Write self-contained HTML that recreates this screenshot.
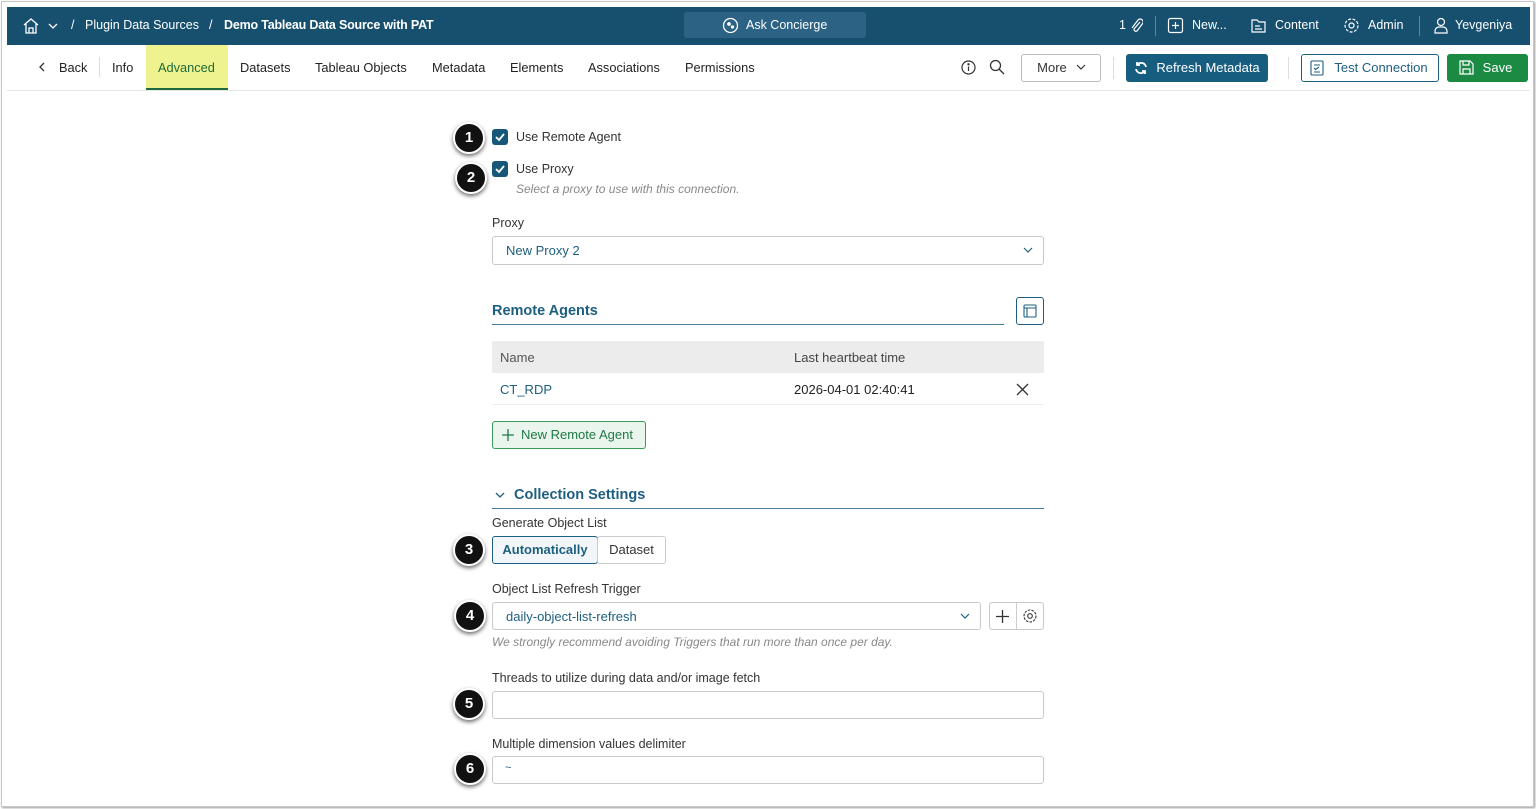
<!DOCTYPE html>
<html><head><meta charset="utf-8"><style>
*{box-sizing:border-box;margin:0;padding:0}
body{width:1536px;height:809px;background:#fff;font-family:"Liberation Sans",sans-serif;font-size:13px;color:#222;position:relative;overflow:hidden}
.frame{position:absolute;left:1px;top:1px;width:1533px;height:806px;background:#fff;border:1px solid #c8c8c8;box-shadow:1px 1px 2px #999}
.a{position:absolute;white-space:nowrap}
.top{position:absolute;left:7px;top:7px;width:1523px;height:38px;background:#174f6f;color:#fff}
.top .a{font-size:12.5px;top:11px}
.tab{font-size:12.8px;top:60px;color:#222}
.lbl{font-size:12.5px;color:#333}
.inp{position:absolute;border:1px solid #c9c9c9;border-radius:3px;background:#fff}
.badge{position:absolute;width:32px;height:32px;border-radius:50%;background:#111;border:2px solid #fff;box-shadow:0 2px 4px rgba(0,0,0,.6);color:#fff;font-weight:bold;font-size:15px;text-align:center;line-height:28px}
.cb{position:absolute;width:16px;height:16px;background:#17587a;border-radius:3px}
.btn{position:absolute;border-radius:3px;font-size:13px;text-align:center}
</style></head><body>
<div class="frame"></div>
<div class="top">
 <svg class="a" style="left:15px;top:10px" width="18" height="18" viewBox="0 0 18 18" fill="none" stroke="#fff" stroke-width="1.3"><path d="M2 8L9 2l7 6M4 7v9h10V7M7 16v-5h4v5"/></svg>
 <svg class="a" style="left:41px;top:15px" width="10" height="8" fill="none" stroke="#fff" stroke-width="1.3"><path d="M1 2l4 4 4-4"/></svg>
 <div class="a" style="left:64px">/</div>
 <div class="a" style="left:78px">Plugin Data Sources</div>
 <div class="a" style="left:202px">/</div>
 <div class="a" style="left:217px;font-weight:bold;letter-spacing:-0.2px">Demo Tableau Data Source with PAT</div>
 <div class="a" style="left:677px;top:5px;width:182px;height:26px;background:#2c6283;border-radius:3px"></div>
 <svg class="a" style="left:715px;top:10px" width="17" height="17" fill="none" stroke="#fff" stroke-width="1.3"><circle cx="8.5" cy="8.5" r="7"/><circle cx="7" cy="7" r="1.2" fill="#fff"/><circle cx="10.5" cy="10" r="1" fill="#fff"/></svg>
 <div class="a" style="left:739px">Ask Concierge</div>
 <div class="a" style="left:1112px">1</div>
 <svg class="a" style="left:1122px;top:10px" width="14" height="17" fill="none" stroke="#fff" stroke-width="1.2"><path d="M11 5l-6 7a2 2 0 003 2l6-8a3 3 0 00-5-3L3 11"/></svg>
 <div class="a" style="left:1148px;top:9px;width:1px;height:20px;background:#5a86a0"></div>
 <svg class="a" style="left:1160px;top:10px" width="17" height="17" fill="none" stroke="#fff" stroke-width="1.2"><rect x="1.5" y="1.5" width="14" height="14" rx="2"/><path d="M8.5 5v7M5 8.5h7"/></svg>
 <div class="a" style="left:1185px">New...</div>
 <svg class="a" style="left:1243px;top:10px" width="17" height="17" fill="none" stroke="#fff" stroke-width="1.2"><path d="M2 3h5l2 2h6v10H2z"/><path d="M5 9h5M5 12h7"/></svg>
 <div class="a" style="left:1268px">Content</div>
 <svg class="a" style="left:1336px;top:10px" width="17" height="17" fill="none" stroke="#fff" stroke-width="1.2"><circle cx="8.5" cy="8.5" r="2.5"/><circle cx="8.5" cy="8.5" r="6.5" stroke-dasharray="3 1.5"/></svg>
 <div class="a" style="left:1361px">Admin</div>
 <div class="a" style="left:1412px;top:9px;width:1px;height:20px;background:#5a86a0"></div>
 <svg class="a" style="left:1426px;top:10px" width="16" height="17" fill="none" stroke="#fff" stroke-width="1.2"><circle cx="8" cy="5" r="3.5"/><path d="M2 16v-2a4 4 0 014-4h4a4 4 0 014 4v2z"/></svg>
 <div class="a" style="left:1448px">Yevgeniya</div>
</div>
<div class="a" style="left:7px;top:90px;width:1523px;height:1px;background:#e5e5e5"></div>
<svg class="a" style="left:38px;top:62px" width="8" height="10" fill="none" stroke="#333" stroke-width="1.3"><path d="M6 1L2 5l4 4"/></svg>
<div class="a tab" style="left:59px">Back</div>
<div class="a" style="left:99px;top:57px;width:1px;height:20px;background:#ddd"></div>
<div class="a tab" style="left:112px">Info</div>
<div class="a" style="left:146px;top:45px;width:82px;height:45px;background:#eef38f;border-bottom:2px solid #1d6b3c"></div>
<div class="a tab" style="left:158px;color:#1f6b3a">Advanced</div>
<div class="a tab" style="left:240px">Datasets</div>
<div class="a tab" style="left:315px">Tableau Objects</div>
<div class="a tab" style="left:432px">Metadata</div>
<div class="a tab" style="left:510px">Elements</div>
<div class="a tab" style="left:588px">Associations</div>
<div class="a tab" style="left:685px">Permissions</div>
<svg class="a" style="left:961px;top:60px" width="15" height="15" fill="none" stroke="#333" stroke-width="1.2"><circle cx="7.5" cy="7.5" r="6.5"/><path d="M7.5 6.5v4.5"/><circle cx="7.5" cy="4.3" r=".6" fill="#333"/></svg>
<svg class="a" style="left:989px;top:59px" width="16" height="16" fill="none" stroke="#333" stroke-width="1.3"><circle cx="6.5" cy="6.5" r="5"/><path d="M10 10l5 5"/></svg>
<div class="btn" style="left:1021px;top:54px;width:80px;height:28px;border:1px solid #bbb;line-height:26px;color:#333">More&nbsp;&nbsp;&nbsp;&nbsp;&nbsp;</div>
<svg class="a" style="left:1076px;top:64px" width="10" height="7" fill="none" stroke="#333" stroke-width="1.2"><path d="M1 1l4 4 4-4"/></svg>
<div class="a" style="left:1113px;top:57px;width:1px;height:22px;background:#ddd"></div>
<div class="btn" style="left:1126px;top:54px;width:142px;height:28px;background:#175d80;color:#fff;line-height:28px;padding-left:22px">Refresh Metadata</div>
<svg class="a" style="left:1134px;top:61px" width="14" height="14" fill="none" stroke="#fff" stroke-width="1.8"><path d="M12 6A5 5 0 003 4M2 8a5 5 0 009 2"/><path d="M3 1v3h3M11 13v-3H8"/></svg>
<div class="a" style="left:1288px;top:57px;width:1px;height:22px;background:#ddd"></div>
<div class="btn" style="left:1301px;top:54px;width:138px;height:28px;border:1px solid #1d5f80;color:#1d5f80;line-height:26px;padding-left:22px">Test Connection</div>
<svg class="a" style="left:1310px;top:60px" width="14" height="16" fill="none" stroke="#1d5f80" stroke-width="1.1"><rect x="1" y="1" width="12" height="14" rx="1"/><path d="M4 5h6M4 8l1.5 1.5L9 7M4 12h6"/></svg>
<div class="btn" style="left:1447px;top:54px;width:81px;height:28px;background:#1b8a43;color:#fff;line-height:28px;padding-left:20px">Save</div>
<svg class="a" style="left:1459px;top:60px" width="15" height="15" fill="none" stroke="#fff" stroke-width="1.2"><path d="M1 1h10l3 3v10H1z"/><path d="M4 1v4h6V1M4 14V9h7v5"/></svg>

<div class="badge" style="left:453px;top:122px">1</div>
<div class="cb" style="left:492px;top:129px"></div>
<svg class="a" style="left:494px;top:131px" width="12" height="12" fill="none" stroke="#fff" stroke-width="1.8"><path d="M2 6l3 3 5-6"/></svg>
<div class="a lbl" style="left:516px;top:130px">Use Remote Agent</div>
<div class="badge" style="left:455px;top:162px">2</div>
<div class="cb" style="left:492px;top:161px"></div>
<svg class="a" style="left:494px;top:163px" width="12" height="12" fill="none" stroke="#fff" stroke-width="1.8"><path d="M2 6l3 3 5-6"/></svg>
<div class="a lbl" style="left:516px;top:162px">Use Proxy</div>
<div class="a" style="left:516px;top:182px;font-size:12px;font-style:italic;color:#888">Select a proxy to use with this connection.</div>
<div class="a lbl" style="left:492px;top:216px">Proxy</div>
<div class="inp" style="left:492px;top:236px;width:552px;height:29px"></div>
<div class="a" style="left:506px;top:243px;color:#1d5f80">New Proxy 2</div>
<svg class="a" style="left:1023px;top:247px" width="10" height="7" fill="none" stroke="#1d5f80" stroke-width="1.2"><path d="M1 1l4 4 4-4"/></svg>

<div class="a" style="left:492px;top:303px;font-size:14.5px;font-weight:bold;color:#1d5f80">Remote Agents</div>
<div class="a" style="left:492px;top:324px;width:512px;height:1px;background:#4a7f9b"></div>
<div class="btn" style="left:1016px;top:297px;width:28px;height:28px;border:1px solid #1d5f80"></div>
<svg class="a" style="left:1023px;top:304px" width="14" height="14" fill="none" stroke="#1d5f80" stroke-width="1.1"><rect x="1" y="1" width="12" height="12" rx="1"/><path d="M1 4h12M4 4v9"/></svg>
<div class="a" style="left:492px;top:341px;width:552px;height:32px;background:#ececec;border-radius:2px"></div>
<div class="a" style="left:500px;top:350px;color:#555">Name</div>
<div class="a" style="left:794px;top:350px;color:#444">Last heartbeat time</div>
<div class="a" style="left:500px;top:382px;color:#1d5f80">CT_RDP</div>
<div class="a" style="left:794px;top:382px;color:#222">2026-04-01 02:40:41</div>
<svg class="a" style="left:1016px;top:383px" width="13" height="13" fill="none" stroke="#333" stroke-width="1.3"><path d="M1 1l11 11M12 1L1 12"/></svg>
<div class="a" style="left:492px;top:404px;width:552px;height:1px;background:#eee"></div>
<div class="btn" style="left:492px;top:421px;width:154px;height:28px;border:1px solid #3a9a5c;background:#eaf5ee;color:#1f7a44;line-height:26px;padding-left:16px">New Remote Agent</div>
<svg class="a" style="left:502px;top:429px" width="12" height="12" fill="none" stroke="#1f7a44" stroke-width="1.3"><path d="M6 0v12M0 6h12"/></svg>

<svg class="a" style="left:495px;top:492px" width="10" height="7" fill="none" stroke="#1d5f80" stroke-width="1.3"><path d="M1 1l4 4 4-4"/></svg>
<div class="a" style="left:514px;top:487px;font-size:14.5px;font-weight:bold;color:#1d5f80">Collection Settings</div>
<div class="a" style="left:492px;top:508px;width:552px;height:1px;background:#4a7f9b"></div>
<div class="a lbl" style="left:492px;top:516px">Generate Object List</div>
<div class="badge" style="left:453px;top:534px">3</div>
<div class="btn" style="left:492px;top:536px;width:106px;height:28px;border:1px solid #1d5f80;background:#f2f6f9;color:#1d5f80;font-weight:bold;line-height:26px">Automatically</div>
<div class="btn" style="left:597px;top:536px;width:69px;height:28px;border:1px solid #ccc;color:#333;line-height:26px">Dataset</div>
<div class="a lbl" style="left:492px;top:582px">Object List Refresh Trigger</div>
<div class="badge" style="left:454px;top:600px">4</div>
<div class="inp" style="left:492px;top:602px;width:489px;height:28px"></div>
<div class="a" style="left:506px;top:609px;color:#1d5f80">daily-object-list-refresh</div>
<svg class="a" style="left:960px;top:613px" width="10" height="7" fill="none" stroke="#1d5f80" stroke-width="1.2"><path d="M1 1l4 4 4-4"/></svg>
<div class="inp" style="left:989px;top:602px;width:55px;height:28px"></div>
<div class="a" style="left:1016px;top:603px;width:1px;height:26px;background:#ccc"></div>
<svg class="a" style="left:996px;top:610px" width="13" height="13" fill="none" stroke="#333" stroke-width="1.3"><path d="M6.5 0v13M0 6.5h13"/></svg>
<svg class="a" style="left:1022px;top:608px" width="16" height="16" fill="none" stroke="#333" stroke-width="1.1"><circle cx="8" cy="8" r="2.3"/><circle cx="8" cy="8" r="6" stroke-dasharray="2.5 1.2"/></svg>
<div class="a" style="left:492px;top:635px;font-size:12px;font-style:italic;color:#888">We strongly recommend avoiding Triggers that run more than once per day.</div>
<div class="a lbl" style="left:492px;top:671px">Threads to utilize during data and/or image fetch</div>
<div class="badge" style="left:453px;top:688px">5</div>
<div class="inp" style="left:492px;top:691px;width:552px;height:28px"></div>
<div class="a lbl" style="left:492px;top:737px">Multiple dimension values delimiter</div>
<div class="badge" style="left:454px;top:753px">6</div>
<div class="inp" style="left:492px;top:756px;width:552px;height:28px"></div>
<div class="a" style="left:505px;top:762px;color:#1d5f80;font-size:11px">~</div>
</body></html>
